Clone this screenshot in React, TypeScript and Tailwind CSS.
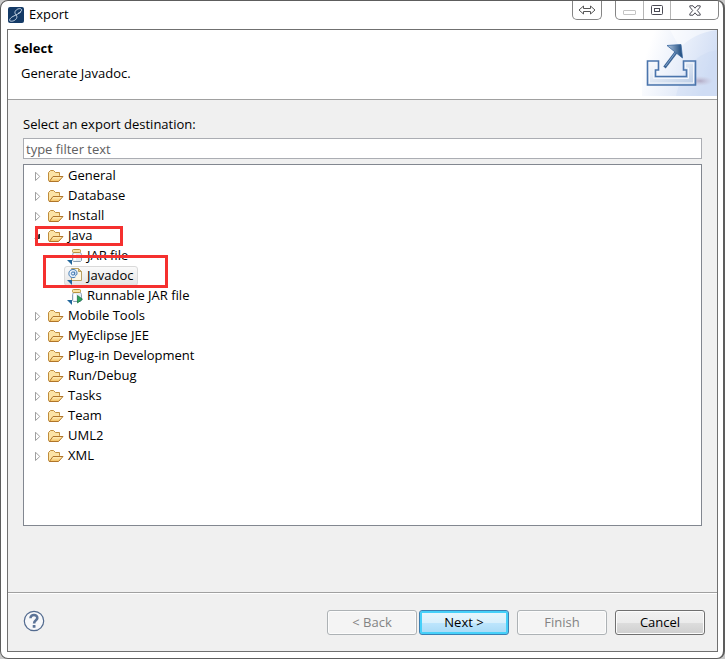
import * as React from "react";
import clsx from "clsx";

type TreeNode = {
  name: string;
  icon?: "jar" | "javadoc" | "runnable";
  marked?: boolean;
  children?: TreeNode[];
};

const DESTINATIONS: TreeNode[] = [
  { name: "General" },
  { name: "Database" },
  { name: "Install" },
  {
    name: "Java",
    marked: true,
    children: [
      { name: "JAR file", icon: "jar" },
      { name: "Javadoc", icon: "javadoc", marked: true },
      { name: "Runnable JAR file", icon: "runnable" },
    ],
  },
  { name: "Mobile Tools" },
  { name: "MyEclipse JEE" },
  { name: "Plug-in Development" },
  { name: "Run/Debug" },
  { name: "Tasks" },
  { name: "Team" },
  { name: "UML2" },
  { name: "XML" },
];

function AppIcon() {
  return (
    <svg width="16" height="16" viewBox="0 0 16 16" aria-hidden="true">
      <rect width="16" height="16" rx="2" fill="#143a66" />
      <path
        d="M10 6.4C13.6 5.2 14.8 2.2 12.4 1.7C9.4 1.2 6.4 4 7 6.2C7.4 7.8 9.4 8.4 8.8 10.6C8 13.4 4 14.9 2 13.9C.8 13 2.4 10.8 5 9.4C7.6 8.1 11 6.8 13 4.6"
        fill="none"
        stroke="#d3e0ee"
        strokeWidth=".9"
      />
    </svg>
  );
}

function FolderIcon() {
  return (
    <svg width="16" height="14" viewBox="0 0 16 14" className="shrink-0" aria-hidden="true">
      <defs>
        <linearGradient id="folder-front" x1="0" y1="0" x2="0" y2="1">
          <stop offset="0" stopColor="#fff3c4" />
          <stop offset="1" stopColor="#f4bf5c" />
        </linearGradient>
      </defs>
      <path d="M.5 11.5V3.5L2.5 1.5H5.5L7.5 3.5H11.5V6.5L9 12.5H1.5Z" fill="#fbe3a5" stroke="#c08d3c" />
      <path d="M1.3 12.5L5 7.5H15L10.5 12.5Z" fill="url(#folder-front)" stroke="#b0752a" />
    </svg>
  );
}

function ItemIcon({ kind }: Readonly<{ kind: TreeNode["icon"] }>) {
  return (
    <svg width="18" height="18" viewBox="0 0 18 18" className="shrink-0" aria-hidden="true">
      {kind === "javadoc" ? (
        <>
          <path d="M4.5 1.5H11.5L14.5 4.5V13.5H4.5Z" fill="#fdf8e6" stroke="#b8a063" />
          <path d="M11.5 1.5V4.5H14.5Z" fill="#f0cd7c" stroke="#b8a063" />
          <circle cx="6" cy="6.5" r="4.5" fill="#e6f0fa" />
          <path d="M8.4 10C5 11.8 1.7 9.6 1.9 6.4C2.1 1.3 10 1.2 10 6.1C10 8.6 7.9 9 7.7 7.6V4.6" fill="none" stroke="#3f78b0" />
          <circle cx="6" cy="6.5" r="1.6" fill="none" stroke="#3f78b0" />
        </>
      ) : (
        <>
          <path d="M6.5 5.5H13.5L14.5 7.5V13.5L13.5 14.5H6.5L5.5 13.5V7.5Z" fill="#e3ecf3" stroke="#8ba0b4" />
          <path d="M8 7V13.5" stroke="#fff" strokeWidth="2" />
          <rect x="5.5" y="2.5" width="8" height="3" rx="1" fill="#f8e2a5" stroke="#b8923f" />
        </>
      )}
      {kind === "runnable" && <path d="M10.5 8.5L15.5 12.2L10.5 16Z" fill="#2da45d" stroke="#14713b" strokeWidth=".7" />}
      <path d="M0 13H5V18Z" fill="#22679c" />
    </svg>
  );
}

function ExportIcon() {
  return (
    <svg width="75" height="66" viewBox="0 0 75 66" aria-hidden="true">
      <defs>
        <linearGradient id="banner" x1="0" y1="0" x2="1" y2=".3">
          <stop offset=".15" stopColor="#fff" />
          <stop offset="1" stopColor="#d3dff5" />
        </linearGradient>
        <linearGradient id="tray" x1="0" y1="0" x2="1" y2="1">
          <stop offset="0" stopColor="#fff" />
          <stop offset="1" stopColor="#b9cbe5" />
        </linearGradient>
        <linearGradient id="arrow" x1="0" y1="0" x2="1" y2="0">
          <stop offset="0" stopColor="#b5cbe4" />
          <stop offset="1" stopColor="#174579" />
        </linearGradient>
        <radialGradient id="shadow">
          <stop offset="0" stopColor="#a294b0" stopOpacity=".7" />
          <stop offset="1" stopColor="#c8bccf" stopOpacity="0" />
        </radialGradient>
      </defs>
      <rect width="75" height="66" fill="url(#banner)" />
      <path d="M28 0H75C58 2 46 9 38 18Z" fill="#fff" opacity=".5" />
      <path d="M34 66C40 40 52 24 75 20V66Z" fill="#c8d7f2" opacity=".3" />
      <ellipse cx="58" cy="51" rx="13" ry="5" fill="url(#shadow)" />
      <path
        d="M5.5 31H16.5V40H13.5V46.5H44.5V40H41.5V31H53.5V55H5.5Z"
        fill="url(#tray)"
        stroke="#4a74ac"
        strokeWidth="1.6"
      />
      <path d="M7.5 33H14.5V38H11.5V48.5H46.5V38H43.5V33H51.5V53H7.5Z" fill="none" stroke="#f3f7fd" />
      <path d="M22.5 37.5L35 21" stroke="#3d6596" strokeWidth="3" />
      <path d="M23.5 36L35 20.5" stroke="#7fa3cc" strokeWidth="1" />
      <path d="M25 15.5L39 14.5L40.5 28Z" fill="url(#arrow)" stroke="#3c69a0" strokeWidth=".8" />
    </svg>
  );
}

function Marker({ className }: Readonly<{ className: string }>) {
  return <span aria-hidden="true" className={clsx("pointer-events-none absolute z-10 border-3 border-[#f5302f]", className)} />;
}

function Expander({ open }: Readonly<{ open: boolean }>) {
  return (
    <svg width="8" height="10" viewBox="0 0 8 10" aria-hidden="true">
      {open ? (
        <path d="M5.5 3V7.5H1Z" fill="#404040" stroke="#262626" />
      ) : (
        <path d="M1.5 1.2L5.8 5.5L1.5 9.5Z" fill="#fff" stroke="#a0a0a0" />
      )}
    </svg>
  );
}

function CategoryRow({ node, selected, onSelect }: Readonly<{ node: TreeNode; selected: string; onSelect: (name: string) => void }>) {
  const [open, setOpen] = React.useState(Boolean(node.children));

  return (
    <li role="treeitem" aria-expanded={open} aria-selected={false}>
      <div className="relative flex h-5 items-center pl-2.5">
        <button type="button" onClick={() => setOpen(!open)} className="flex items-center">
          <Expander open={open} />
          <span className="ml-1.5">
            <FolderIcon />
          </span>
          <span className="ml-1 pb-0.5">{node.name}</span>
        </button>
        {node.marked && <Marker className="inset-y-0 left-[11px] w-[88px]" />}
      </div>
      {open && node.children && (
        <ul role="group">
          {node.children.map((child) => (
            <li key={child.name} role="treeitem" aria-selected={child.name === selected} className="relative flex h-5 items-center pl-10">
              <button
                type="button"
                onClick={() => onSelect(child.name)}
                className={clsx(
                  "flex h-5 items-center rounded-[3px] border pr-1 pl-0.5",
                  child.name === selected ? "border-[#d9d9d9] bg-linear-to-b from-[#fafafa] to-[#e5e5e5]" : "border-transparent",
                )}
              >
                <ItemIcon kind={child.icon} />
                <span className="ml-0.5 pb-0.5">{child.name}</span>
              </button>
              {child.marked && <Marker className="-top-[11px] left-[19px] h-[33px] w-[125px]" />}
            </li>
          ))}
        </ul>
      )}
    </li>
  );
}

const BUTTON = "h-[25px] w-[90px] rounded-[3px] border pb-px";
const BUTTON_OFF = "border-[#adb2b5] bg-[#f4f4f4] text-[#838383] shadow-[inset_0_0_0_1px_#fcfcfc]";
const BUTTON_NORMAL =
  "border-[#707070] bg-[linear-gradient(#f2f2f2,#ebebeb_50%,#dddddd_50%,#cfcfcf)] shadow-[inset_0_0_0_1px_#fcfcfc]";
const BUTTON_DEFAULT =
  "border-[#3c7fb1] bg-[linear-gradient(#eaf6fd,#d9f0fc_50%,#bee6fd_50%,#a7d9f5)] shadow-[inset_0_0_0_2px_#46d0f9]";

function TitleBar() {
  return (
    <header className="flex h-7 items-start pr-1 pl-[7px]">
      <div className="flex items-start gap-[5px]">
        <span className="pt-1.5">
          <AppIcon />
        </span>
        <h1 className="pt-[3px]">Export</h1>
      </div>
      <button
        type="button"
        aria-label="Resize"
        className="ml-auto flex h-[19px] w-[30px] items-center justify-center rounded-b-[5px] border border-t-0 border-[#858585]"
      >
        <svg width="18" height="10" viewBox="0 0 18 10" aria-hidden="true">
          <path d="M1 5L5.5 1V3.5H12.5V1L17 5L12.5 9V6.5H5.5V9Z" fill="#fff" stroke="#555" />
        </svg>
      </button>
      <div className="ml-[13px] flex h-[19px] divide-x divide-[#b5b5b5] rounded-b-[5px] border border-t-0 border-[#858585]">
        <button type="button" aria-label="Minimize" disabled className="flex w-7 items-center justify-center">
          <svg width="13" height="12" viewBox="0 0 13 12" aria-hidden="true">
            <rect x=".5" y="6.5" width="12" height="4" rx=".5" fill="#fff" stroke="#c4c4c4" />
          </svg>
        </button>
        <button type="button" aria-label="Maximize" className="flex w-[27px] items-center justify-center">
          <svg width="12" height="10" viewBox="0 0 12 10" aria-hidden="true">
            <rect x=".5" y=".5" width="11" height="9" rx="1" fill="#fff" stroke="#4b4b55" />
            <rect x="3.5" y="3.5" width="5" height="3" fill="#fff" stroke="#4b4b55" />
          </svg>
        </button>
        <button type="button" aria-label="Close" className="flex w-[47px] items-center justify-center">
          <svg width="12" height="11" viewBox="0 0 12 11" aria-hidden="true">
            <path
              d="M.8 .8H4L6 3.2L8 .8H11.2V2L8.3 5.5L11.2 9V10.2H8L6 7.8L4 10.2H.8V9L3.7 5.5L.8 2Z"
              fill="#fff"
              stroke="#4b4b55"
            />
          </svg>
        </button>
      </div>
    </header>
  );
}

export default function App(): React.JSX.Element {
  const [selected, setSelected] = React.useState("Javadoc");
  const [filter, setFilter] = React.useState("");

  return (
    <div className="min-h-screen bg-[#c9c9c9] font-['Open_Sans','Noto_Sans',sans-serif] text-[13px] leading-5 text-black">
      <div className="flex min-h-screen flex-col rounded-lg border border-r-2 border-[#5d5d5d] bg-white pb-1.5">
        <TitleBar />
        <main className="mr-[5px] ml-1.5 flex flex-1 flex-col border border-[#707070] bg-[#f0f0f0]">
          <section className="flex h-[70px] justify-between border-b border-[#a0a0a0] bg-white">
            <div className="pt-2 pl-1.5">
              <h2 className="font-bold">Select</h2>
              <p className="pt-[5px] pl-[7px]">Generate Javadoc.</p>
            </div>
            <ExportIcon />
          </section>

          <section className="flex flex-1 flex-col border-b border-[#a0a0a0] px-[15px] pt-3.5 pb-[66px]">
            <label htmlFor="filter">Select an export destination:</label>
            <input
              id="filter"
              type="text"
              placeholder="type filter text"
              value={filter}
              onChange={(e) => setFilter(e.target.value)}
              className="mt-1 h-[21px] border border-[#abadb3] bg-white px-0.5 outline-none placeholder:text-[#606060]"
            />
            <ul role="tree" aria-label="Export destinations" className="mt-[5px] flex-1 border border-[#828790] bg-white pt-px">
              {DESTINATIONS.filter((node) => node.name.toLowerCase().includes(filter.toLowerCase())).map((node) => (
                <CategoryRow key={node.name} node={node} selected={selected} onSelect={setSelected} />
              ))}
            </ul>
          </section>

          <footer className="flex h-[58px] items-start border-t border-white pt-4 pr-3 pl-[15px]">
            <button type="button" aria-label="Help">
              <svg width="22" height="22" viewBox="0 0 22 22" aria-hidden="true">
                <circle cx="11" cy="11" r="9.7" fill="#f7f8fa" stroke="#536b8f" strokeWidth="1.2" />
                <path
                  d="M7.5 8.2C7.5 3.8 14.5 4.2 14.3 8.1C14.2 10.4 11.1 10.3 11.1 13.4"
                  fill="none"
                  stroke="#5b7397"
                  strokeWidth="2.6"
                />
                <rect x="9.7" y="15" width="2.8" height="2.8" rx=".6" fill="#5b7397" />
              </svg>
            </button>
            <div className="ml-auto flex gap-2">
              <div className="flex gap-0.5">
                <button type="button" disabled className={clsx(BUTTON, BUTTON_OFF)}>
                  &lt; Back
                </button>
                <button type="button" className={clsx(BUTTON, BUTTON_DEFAULT)}>
                  Next &gt;
                </button>
              </div>
              <button type="button" disabled className={clsx(BUTTON, BUTTON_OFF)}>
                Finish
              </button>
              <button type="button" className={clsx(BUTTON, BUTTON_NORMAL)}>
                Cancel
              </button>
            </div>
          </footer>
        </main>
      </div>
    </div>
  );
}
